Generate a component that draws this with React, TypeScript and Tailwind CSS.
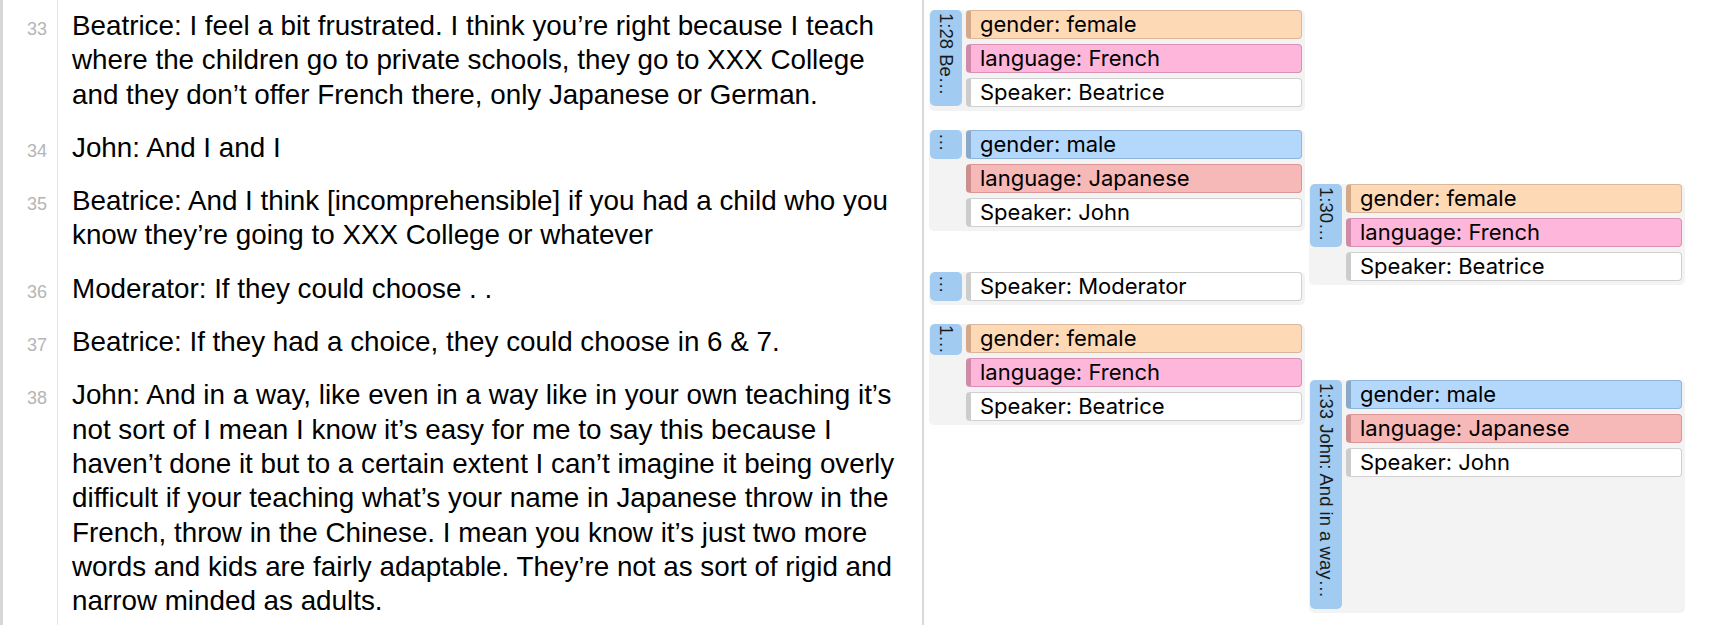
import React from "react";

type Kind = "female" | "male" | "french" | "japanese" | "speaker";

const tagColors: Record<Kind, string> = {
  female: "bg-[#fdd9b6] border-[#dcb698] border-l-[#d3a98a]",
  male: "bg-[#b3d8fb] border-[#90b5d8] border-l-[#88a9c9]",
  french: "bg-[#feb7da] border-[#da90b3] border-l-[#cf8aaa]",
  japanese: "bg-[#f7b8b8] border-[#da9696] border-l-[#cf8e8e]",
  speaker: "bg-white border-[#d0d0d0] border-l-[#cccccc]",
};

const entries = [
  {
    n: 33,
    text: "Beatrice: I feel a bit frustrated. I think you’re right because I teach where the children go to private schools, they go to XXX College and they don’t offer French there, only Japanese or German.",
  },
  { n: 34, text: "John: And I and I" },
  {
    n: 35,
    text: "Beatrice: And I think [incomprehensible] if you had a child who you know they’re going to XXX College or whatever",
  },
  { n: 36, text: "Moderator: If they could choose . ." },
  { n: 37, text: "Beatrice: If they had a choice, they could choose in 6 & 7." },
  {
    n: 38,
    text: "John: And in a way, like even in a way like in your own teaching it’s not sort of I mean I know it’s easy for me to say this because I haven’t done it but to a certain extent I can’t imagine it being overly difficult if your teaching what’s your name in Japanese throw in the French, throw in the Chinese. I mean you know it’s just two more words and kids are fairly adaptable. They’re not as sort of rigid and narrow minded as adults.",
  },
];

type Tag = { kind: Kind; label: string };

function Group({
  label,
  tabClass,
  tags,
  className,
}: {
  label: string;
  tabClass: string;
  tags: Tag[];
  className: string;
}) {
  return (
    <div className={`flex gap-[4px] rounded-[5px] bg-[#f3f3f3] pb-[4px] pl-[1px] pr-[3px] ${className}`}>
      <div className={`flex w-[32px] shrink-0 justify-center overflow-hidden rounded-[5px] bg-[#a1cbf1] ${tabClass}`}>
        <span className="whitespace-nowrap text-[18.5px] leading-[32px] text-[#1a1a1a] [writing-mode:vertical-rl]">
          {label}
        </span>
      </div>
      <div className="flex flex-1 flex-col gap-[5px]">
        {tags.map((t) => (
          <div
            key={t.label}
            className={`flex h-[29px] items-center rounded-[4px] border border-l-[5px] pl-[9px] font-['Inter',sans-serif] text-[22px] text-black ${tagColors[t.kind]}`}
          >
            {t.label}
          </div>
        ))}
      </div>
    </div>
  );
}

export default function App() {
  return (
    <div className="flex h-[625px] w-[1727px] overflow-hidden bg-white font-['Liberation_Sans',Arial,sans-serif]">
      <div className="w-[3px] shrink-0 bg-[#d6d6d6]" />

      {/* transcript */}
      <div className="w-[921px] shrink-0 border-r-2 border-[#d9d9d9]">
        {entries.map((e, i) => (
          <div key={e.n} className="flex">
            <div
              className={`w-[55px] shrink-0 border-r border-[#e6e6e6] pr-[10px] text-right text-[27.8px] leading-[34.3px] ${i === 0 ? "pt-[9px]" : ""}`}
            >
              <span className="text-[18px] text-[#b5b5b5]">{e.n}</span>
            </div>
            <div
              className={`flex-1 pb-[19px] pl-[14px] pr-[10px] text-[27.8px] leading-[34.3px] text-black ${i === 0 ? "pt-[9px]" : ""}`}
            >
              {e.text}
            </div>
          </div>
        ))}
      </div>

      {/* annotations */}
      <div className="flex gap-[4px] pl-[5px]">
        <div className="flex w-[376px] flex-col">
          <Group
            className="mt-[10px]"
            label="1:28 Be…"
            tabClass="h-[96px] pt-[3px]"
            tags={[
              { kind: "female", label: "gender: female" },
              { kind: "french", label: "language: French" },
              { kind: "speaker", label: "Speaker: Beatrice" },
            ]}
          />
          <Group
            className="mt-[19px]"
            label="…"
            tabClass="h-[29px] pt-[3px]"
            tags={[
              { kind: "male", label: "gender: male" },
              { kind: "japanese", label: "language: Japanese" },
              { kind: "speaker", label: "Speaker: John" },
            ]}
          />
          <Group
            className="mt-[41px]"
            label="…"
            tabClass="h-[29px] pt-[3px]"
            tags={[{ kind: "speaker", label: "Speaker: Moderator" }]}
          />
          <Group
            className="mt-[19px]"
            label="1…"
            tabClass="h-[31px] pt-[1px]"
            tags={[
              { kind: "female", label: "gender: female" },
              { kind: "french", label: "language: French" },
              { kind: "speaker", label: "Speaker: Beatrice" },
            ]}
          />
        </div>

        <div className="flex w-[376px] flex-col">
          <Group
            className="mt-[184px]"
            label="1:30…"
            tabClass="h-[63px] pt-[3px]"
            tags={[
              { kind: "female", label: "gender: female" },
              { kind: "french", label: "language: French" },
              { kind: "speaker", label: "Speaker: Beatrice" },
            ]}
          />
          <Group
            className="mt-[95px]"
            label="1:33 John: And in a way…"
            tabClass="h-[229px] pt-[3px]"
            tags={[
              { kind: "male", label: "gender: male" },
              { kind: "japanese", label: "language: Japanese" },
              { kind: "speaker", label: "Speaker: John" },
            ]}
          />
        </div>
      </div>
    </div>
  );
}
